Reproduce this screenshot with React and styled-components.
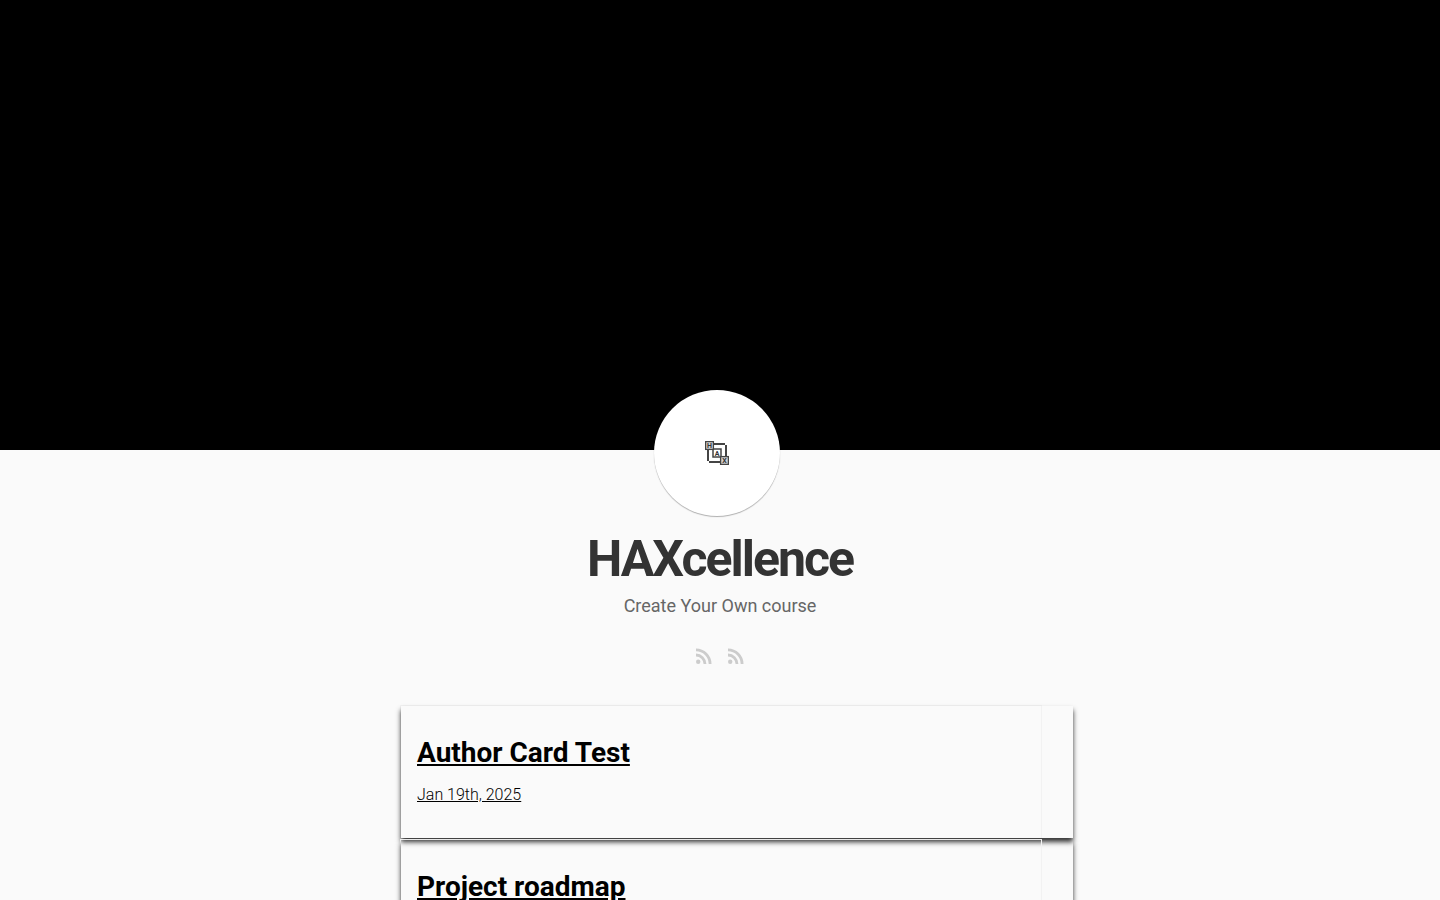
import React from "react";
import styled, { createGlobalStyle } from "styled-components";

const GlobalStyle = createGlobalStyle`
  body {
    margin: 0;
    background: #fafafa;
    color: #333;
    font-family: Roboto, sans-serif;
    overflow: hidden;
  }
`;

const Page = styled.div`
  height: 100vh;
  overflow: hidden;
`;

const Cover = styled.div`
  height: 50vh;
  background: #000;
`;

const Intro = styled.header`
  position: relative;
  display: flex;
  flex-direction: column;
  align-items: center;
  padding-top: 84px;
`;

const Avatar = styled.div`
  position: absolute;
  top: -60px;
  left: 50%;
  margin-left: -66px;
  width: 126px;
  height: 126px;
  border-radius: 50%;
  background: #fff;
  box-shadow: 0 1px 1px rgba(0, 0, 0, 0.3);
  display: flex;
  align-items: center;
  justify-content: center;
`;

const SiteTitle = styled.h1`
  margin: 0;
  font-size: 50px;
  line-height: 50px;
  font-weight: 700;
  letter-spacing: -2px;
`;

const Tagline = styled.p`
  margin: 8px 0 0;
  font-size: 18px;
  line-height: 28px;
  color: #666;
`;

const Feeds = styled.nav`
  display: flex;
  gap: 16px;
  margin-top: 28px;
`;

const FeedLink = styled.a`
  display: block;
  width: 16px;
  height: 16px;
  color: #ccc;

  svg {
    display: block;
  }
`;

const Posts = styled.main`
  max-width: 640px;
  margin: 41px auto 0;
`;

const Post = styled.article`
  width: 100%;
  border: 1px solid #f2f2f2;
  border-bottom: 0;
  margin-bottom: 1px;
`;

const PostLink = styled.a`
  display: block;
  width: 100%;
  padding: 29px 16px 31px;
  color: #000;
  box-shadow: 0 4px 5px 0 rgba(0, 0, 0, 0.8);
`;

const PostTitle = styled.h2`
  margin: 0;
  font-size: 28px;
  line-height: 36px;
  font-weight: 700;
`;

const PostDate = styled.time`
  display: block;
  margin-top: 12px;
  font-size: 16px;
  line-height: 24px;
  font-weight: 300;
`;

const Logo = () => (
  <svg width="24" height="24" viewBox="0 0 24 24" aria-hidden="true">
    <g fill="none" stroke="#444" strokeWidth="2">
      <path d="M9 3H20" />
      <path d="M21 4V16" />
      <path d="M3 9V20" />
      <path d="M4 21H15" />
      <rect x="8" y="8" width="8" height="8" strokeWidth="1.5" />
    </g>
    <g fill="#d4d4d4" stroke="#444" strokeWidth="1.3">
      <rect x="0.6" y="0.6" width="7.8" height="7.8" />
      <rect x="15.6" y="15.6" width="7.8" height="7.8" />
    </g>
    <g fill="#333" fontFamily="Roboto" fontSize="7" fontWeight="700" textAnchor="middle">
      <text x="4.5" y="7">H</text>
      <text x="12" y="14.5">A</text>
      <text x="19.5" y="22">X</text>
    </g>
  </svg>
);

const FeedIcon = () => (
  <svg width="16" height="16" viewBox="0 0 16 16" aria-hidden="true">
    <circle cx="2.2" cy="13.8" r="2.2" fill="currentColor" />
    <g fill="none" stroke="currentColor" strokeWidth="2.8">
      <path d="M0 7A9 9 0 0 1 9 16" />
      <path d="M0 1.9A14.1 14.1 0 0 1 14.1 16" />
    </g>
  </svg>
);

const posts = [
  { title: "Author Card Test", date: "Jan 19th, 2025", iso: "2025-01-19" },
  { title: "Project roadmap" },
];

export default function App() {
  return (
    <>
      <GlobalStyle />
      <Page>
        <Cover />
        <Intro>
          <Avatar>
            <Logo />
          </Avatar>
          <SiteTitle>HAXcellence</SiteTitle>
          <Tagline>Create Your Own course</Tagline>
          <Feeds>
            <FeedLink href="#atom" aria-label="Atom feed">
              <FeedIcon />
            </FeedLink>
            <FeedLink href="#rss" aria-label="RSS feed">
              <FeedIcon />
            </FeedLink>
          </Feeds>
        </Intro>
        <Posts>
          {posts.map((post) => (
            <Post key={post.title}>
              <PostLink href="#post">
                <PostTitle>{post.title}</PostTitle>
                {post.date && <PostDate dateTime={post.iso}>{post.date}</PostDate>}
              </PostLink>
            </Post>
          ))}
        </Posts>
      </Page>
    </>
  );
}
